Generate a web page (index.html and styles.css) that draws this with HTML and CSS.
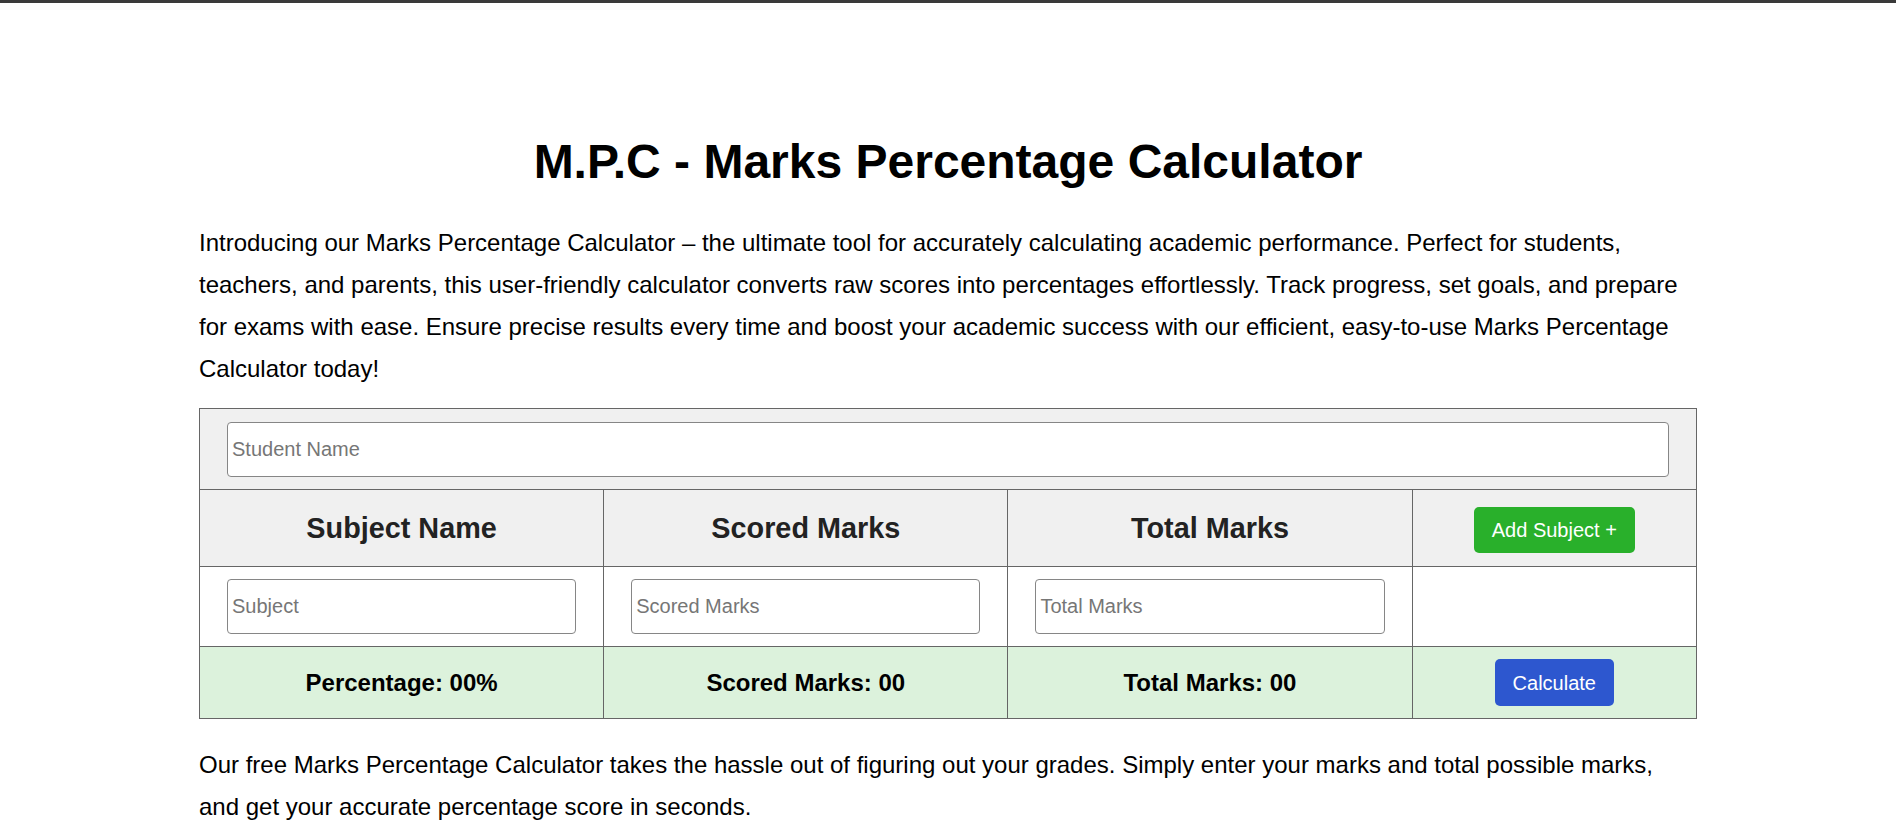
FILE: index.html
```html
<!DOCTYPE html>
<html lang="en">
<head>
    <meta charset="UTF-8">
    <meta name="viewport" content="width=device-width, initial-scale=1.0">
    <title>M.P.C - Marks Percentage Calculator</title>
    <link rel="stylesheet" href="styles.css">
</head>
<body>
    <div class="container">
        <h1>M.P.C - Marks Percentage Calculator</h1>
        <p class="intro">Introducing our Marks Percentage Calculator – the ultimate tool for accurately calculating academic performance. Perfect for students, teachers, and parents, this user-friendly calculator converts raw scores into percentages effortlessly. Track progress, set goals, and prepare for exams with ease. Ensure precise results every time and boost your academic success with our efficient, easy-to-use Marks Percentage Calculator today!</p>

        <table class="calc-table">
            <colgroup>
                <col class="col-wide">
                <col class="col-wide">
                <col class="col-wide">
                <col class="col-small">
            </colgroup>
            <tr class="name-row">
                <td colspan="4"><input type="text" id="studentName" placeholder="Student Name"></td>
            </tr>
            <tr class="head-row">
                <th>Subject Name</th>
                <th>Scored Marks</th>
                <th>Total Marks</th>
                <th class="btn-cell"><button type="button" class="btn btn-add">Add Subject +</button></th>
            </tr>
            <tr class="input-row">
                <td><input type="text" placeholder="Subject"></td>
                <td><input type="number" placeholder="Scored Marks"></td>
                <td><input type="number" placeholder="Total Marks"></td>
                <td></td>
            </tr>
            <tr class="result-row">
                <td>Percentage: <span id="percent">00</span>%</td>
                <td>Scored Marks: <span id="scored">00</span></td>
                <td>Total Marks: <span id="total">00</span></td>
                <td><button type="button" class="btn btn-calc">Calculate</button></td>
            </tr>
        </table>

        <p class="note">Our free Marks Percentage Calculator takes the hassle out of figuring out your grades. Simply enter your marks and total possible marks, and get your accurate percentage score in seconds.</p>
    </div>
</body>
</html>
```

FILE: styles.css
```css
body {
    font-family: "Liberation Sans", Arial, sans-serif;
    margin: 0;
    padding: 0;
    background-color: #fff;
    color: #000;
    border-top: 3px solid #3a3a3a;
}
.container {
    width: 1498px;
    margin: 0 auto;
    padding-top: 131px;
}
h1 {
    margin: 0;
    font-size: 48px;
    font-weight: bold;
    text-align: center;
}
.intro {
    margin: 33px 0 18px;
    font-size: 24px;
    line-height: 42px;
}
.note {
    margin: 25px 0 0;
    font-size: 24px;
    line-height: 42px;
}
.calc-table {
    width: 100%;
    border-collapse: collapse;
    table-layout: fixed;
}
.col-wide {
    width: 27%;
}
.col-small {
    width: 19%;
}
.calc-table td,
.calc-table th {
    border: 1px solid #666;
    text-align: center;
    vertical-align: middle;
}
.name-row td {
    background-color: #f0f0f0;
    padding: 13px 27px 12px;
}
.head-row th {
    background-color: #f0f0f0;
    padding: 21px 8px;
    font-size: 28.8px;
    line-height: 34px;
    color: #222;
}
.head-row .btn-cell {
    padding: 0 8px;
}
.input-row td {
    padding: 12px 27px;
}
.result-row td {
    background-color: #dcf2dc;
    padding: 12px 8px;
    font-size: 24px;
    font-weight: bold;
}
input {
    display: block;
    width: 100%;
    height: 55px;
    box-sizing: border-box;
    padding: 0 4px;
    border: 1px solid #868686;
    border-radius: 4px;
    font-family: "Liberation Sans", Arial, sans-serif;
    font-size: 20px;
    color: #000;
    background: #fff;
}
input::placeholder {
    color: #767676;
}
input[type=number] {
    -moz-appearance: textfield;
}
input::-webkit-outer-spin-button,
input::-webkit-inner-spin-button {
    -webkit-appearance: none;
    margin: 0;
}
.btn {
    font-family: "Liberation Sans", Arial, sans-serif;
    font-size: 20px;
    line-height: 24px;
    color: #fff;
    border: none;
    border-radius: 5px;
    padding: 11px 18px;
    cursor: pointer;
}
.btn-add {
    background-color: #29b02b;
    margin-top: 4px;
}
.btn-calc {
    background-color: #2d57cf;
    padding: 12px 18px 11px;
}
```
